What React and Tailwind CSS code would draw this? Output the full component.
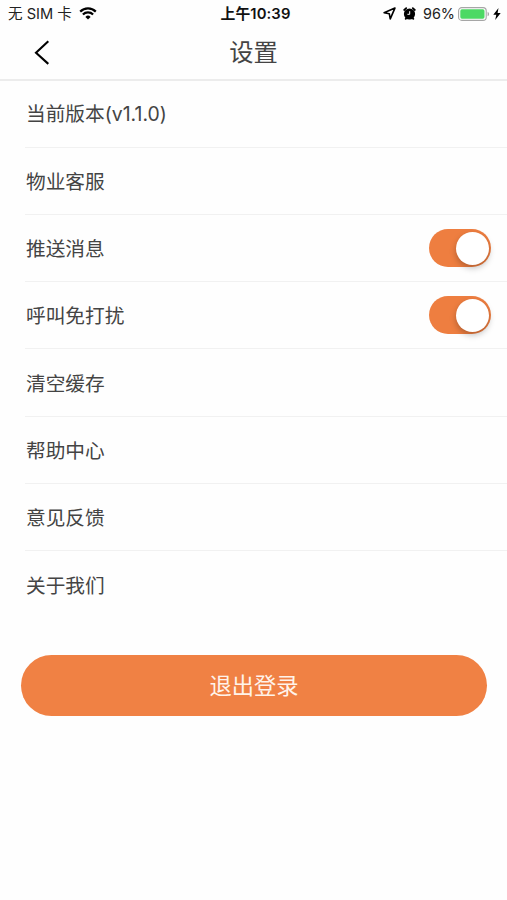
import { useState } from 'react';

const items = [
  { id: 'version', label: '当前版本', extra: '(v1.1.0)' },
  { id: 'service', label: '物业客服' },
  { id: 'push', label: '推送消息', toggle: true },
  { id: 'dnd', label: '呼叫免打扰', toggle: true },
  { id: 'cache', label: '清空缓存' },
  { id: 'help', label: '帮助中心' },
  { id: 'feedback', label: '意见反馈' },
  { id: 'about', label: '关于我们' },
];

function StatusBar() {
  return (
    <div className="grid h-[27px] grid-cols-[1fr_auto_1fr] items-center pl-2 pr-1.5 font-['Inter','Noto_Sans_CJK_SC',sans-serif] text-[14px] leading-none text-black">
      <div className="flex items-center whitespace-nowrap">
        <span className="pt-0.5 text-[14.6px] text-[#222]">无 SIM 卡</span>
        <svg className="ml-[7px] h-[13px] w-[18px]" viewBox="0 0 18 13">
          <path d="M9 12.6 6.4 9.9a3.7 3.7 0 0 1 5.2 0z" fill="currentColor" />
          <path d="M3.9 7.5a7.2 7.2 0 0 1 10.2 0M1.2 4.6a11 11 0 0 1 15.6 0" fill="none" stroke="currentColor" strokeWidth="2.2" />
        </svg>
      </div>
      <span className="pl-0.5 pt-0.5 text-[14.8px] font-semibold tracking-[0.1px] text-[#111]">上午10:39</span>
      <div className="flex items-center justify-end">
        <svg className="h-[13px] w-[13px]" viewBox="0 0 12 12">
          <path d="M11 1 1 5.3l4.8.9.9 4.8z" fill="none" stroke="currentColor" strokeWidth="1.5" strokeLinejoin="round" />
        </svg>
        <svg className="ml-[7px] h-[13px] w-[13px]" viewBox="0 0 13 13">
          <circle cx="6.5" cy="7" r="5.6" fill="currentColor" />
          <path d="M1.2 3 3.2 1.2M11.8 3 9.8 1.2M3.4 11l-.7.9M9.6 11l.7.9" stroke="currentColor" strokeWidth="1.8" strokeLinecap="round" />
          <path d="M6.7 4.2v3.1H4.4" fill="none" stroke="#fff" strokeWidth="1" />
        </svg>
        <span className="ml-[7px] pt-0.5 text-[14.4px] text-[#222]">96%</span>
        <svg className="ml-[3px] h-[14px] w-[32px]" viewBox="0 0 32 14">
          <rect x=".6" y=".6" width="27.6" height="12.8" rx="3.2" fill="#fff" stroke="#a6a6a6" strokeWidth="1.1" />
          <rect x="2.3" y="2.3" width="24.2" height="9.4" rx="1.6" fill="#4cd964" />
          <path d="M29.6 4.7a2.5 2.5 0 0 1 0 4.6z" fill="#a6a6a6" />
        </svg>
        <svg className="ml-[3px] h-[12px] w-[8px]" viewBox="0 0 8 12">
          <path d="M5.5 0 .3 6.7h3L2.2 12l5.5-7H4.6z" fill="currentColor" />
        </svg>
      </div>
    </div>
  );
}

function Toggle({ on, onChange }) {
  return (
    <button
      type="button"
      role="switch"
      aria-checked={on}
      onClick={onChange}
      className={`flex h-[38px] w-[62.5px] items-center rounded-full px-0.5 ${on ? 'justify-end bg-[#ee7e40]' : 'justify-start bg-gray-200'}`}
    >
      <span className="h-[33px] w-[33px] rounded-full bg-white shadow-[0_3px_6px_rgba(0,0,0,0.25)]" />
    </button>
  );
}

export default function App() {
  const [settings, setSettings] = useState({ push: true, dnd: true });

  const flip = (id) => setSettings({ ...settings, [id]: !settings[id] });

  return (
    <main className="min-h-screen bg-[#fefefe] font-['Noto_Sans_CJK_SC',sans-serif] text-[#444]">
      <StatusBar />

      <header className="grid h-[53.6px] grid-cols-[1fr_auto_1fr] items-center border-b-2 border-[#ececec]">
        <button type="button" aria-label="返回" className="ml-[34px] w-4 text-black">
          <svg className="h-[25px] w-4" viewBox="0 0 16 25">
            <path d="M14.3 1.2 2 12.7l12.3 11.2" fill="none" stroke="currentColor" strokeWidth="2.1" />
          </svg>
        </button>
        <h1 className="pb-[3px] text-[24.3px] leading-none">设置</h1>
      </header>

      <ul>
        {items.map((item) => (
          <li
            key={item.id}
            className="ml-[25px] flex h-[67.2px] items-center justify-between border-b border-[#f1f1f1] pr-4 pl-px text-[19.7px] last:border-b-0"
          >
            <span>
              {item.label}
              {item.extra && <span className="font-['Inter',sans-serif] text-[19.4px]">{item.extra}</span>}
            </span>
            {item.toggle && <Toggle on={settings[item.id]} onChange={() => flip(item.id)} />}
          </li>
        ))}
      </ul>

      <div className="pl-[21px] pr-5 pt-[36.8px]">
        <button type="button" className="h-[61px] w-full rounded-full bg-[#f08144] pb-px text-[22.3px] text-[#fff3ea]">
          退出登录
        </button>
      </div>
    </main>
  );
}
